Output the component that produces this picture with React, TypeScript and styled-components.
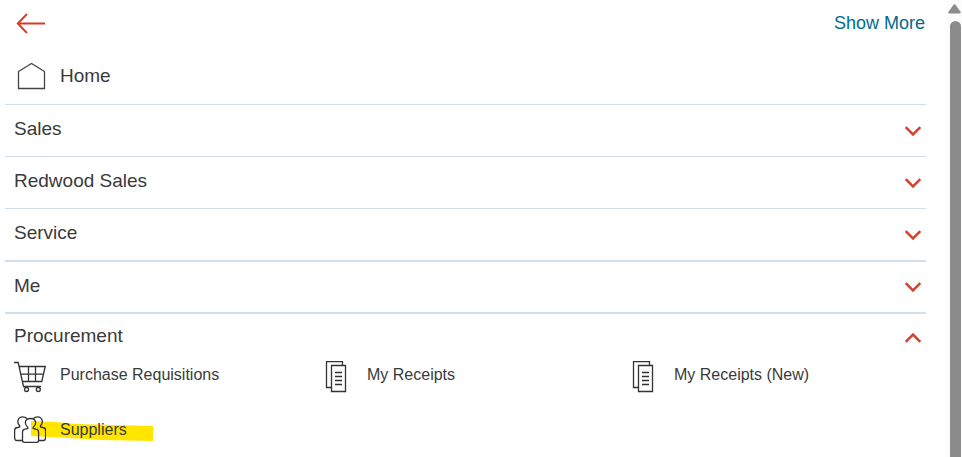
import React, { useState } from "react";
import styled, { createGlobalStyle } from "styled-components";

const GlobalStyle = createGlobalStyle`
  * { box-sizing: border-box; }
  body {
    margin: 0;
    overflow: hidden;
    background: #fff;
    color: #3a3a3a;
    font-family: "Liberation Sans", Arial, sans-serif;
  }
`;

const Page = styled.div`
  display: flex;
  height: 100vh;
`;

const Panel = styled.main`
  flex: 1;
  min-width: 0;
  padding: 0 20px 0 5px;
  overflow: hidden;
`;

const TopBar = styled.header`
  display: flex;
  align-items: center;
  justify-content: space-between;
  height: 46px;
  padding: 0 1px 0 11px;
`;

const BackButton = styled.button`
  display: flex;
  padding: 0;
  border: 0;
  background: none;
  color: #d63b25;
  cursor: pointer;
`;

const ShowMore = styled.a`
  color: #006b8f;
  font-size: 18px;
  line-height: 22px;
  text-decoration: none;
`;

const HomeLink = styled.a`
  display: flex;
  align-items: center;
  height: 59px;
  padding: 2px 0 0 12px;
  gap: 14px;
  border-bottom: 1px solid #d3dfe8;
  color: inherit;
  font-size: 19px;
  line-height: 22px;
  text-decoration: none;
`;

const Section = styled.section<{ $rule: number }>`
  border-bottom: ${(p) => p.$rule}px solid #d3dfe8;
`;

const SectionButton = styled.button<{ $height: number }>`
  display: flex;
  align-items: center;
  justify-content: space-between;
  width: 100%;
  height: ${(p) => p.$height}px;
  padding: 0 4px 0 9px;
  border: 0;
  background: none;
  color: inherit;
  font: inherit;
  font-size: 19px;
  line-height: 22px;
  text-align: left;
  cursor: pointer;
`;

const SectionLabel = styled.span`
  padding-bottom: 3px;
`;

const ItemGrid = styled.nav`
  display: grid;
  grid-template-columns: repeat(3, 1fr);
  row-gap: 23px;
`;

const Item = styled.a`
  position: relative;
  display: flex;
  align-items: center;
  gap: 14px;
  height: 32px;
  padding-left: 9px;
  color: inherit;
  font-size: 16px;
  line-height: 20px;
  text-decoration: none;
`;

const ItemLabel = styled.span`
  position: relative;
  padding-bottom: 4px;
  white-space: nowrap;
`;

const Icon = styled.svg`
  position: relative;
  flex: none;
  fill: none;
  stroke: #333;
  stroke-width: 1.3;
`;

const Marker = styled.svg`
  position: absolute;
  left: 26px;
  top: 5px;
  fill: #ffe500;
`;

const ScrollTrack = styled.div`
  display: flex;
  flex-direction: column;
  align-items: flex-end;
  width: 16px;
  padding: 4px 1px 0 0;
  gap: 7px;
  background: #fcfcfc;
`;

const ScrollThumb = styled.div`
  flex: 1;
  width: 11px;
  border-radius: 6px 6px 0 0;
  background: #8b8b8b;
`;

function Chevron({ open }: { open: boolean }) {
  return (
    <svg width="18" height="12" viewBox="0 0 18 12" fill="none" stroke="#d04532" strokeWidth="2.5" aria-hidden="true">
      <path d={open ? "M1.7 9.8 9 2.5l7.3 7.3" : "M1.7 2.2 9 9.5l7.3-7.3"} />
    </svg>
  );
}

function CartIcon() {
  return (
    <Icon width="32" height="32" viewBox="0 0 32 32" aria-hidden="true">
      <path d="M0 1.5h4.2L9.5 25.5h17.5" />
      <path d="M5.2 5.5h26l-3.4 15H8.4M6.8 13.2h22.6M14.5 5.5v15M21.5 5.5v15" />
      <circle cx="12.5" cy="28.5" r="2" />
      <circle cx="24.3" cy="28.5" r="2" />
    </Icon>
  );
}

function ReceiptIcon() {
  return (
    <Icon width="32" height="32" viewBox="0 0 32 32" aria-hidden="true">
      <path d="M10.5 26.5h-5v-26h16v4" />
      <path d="M10.5 4.5h14v26h-14z" />
      <path d="M14 11.5h7M14 15.5h7M14 19.5h7M14 23.5h7" />
    </Icon>
  );
}

function PeopleIcon() {
  return (
    <Icon width="32" height="32" viewBox="0 0 32 32" aria-hidden="true">
      <path d="M8 24.5H2.5Q.6 24.5.6 21v-6.500q0-2.800 2.700-3l2.400-.5V9.800Q3.500 7.500 3.900 4.800 4.800.8 8.700.8q2.500 0 4.300 1.700" />
      <path d="M24.8 24.500h5q1.800 0 1.800-3.500v-6.500q0-2.800-2.700-3l-2.400-.5V9.800q2.200-2.300 1.800-5Q27.400.8 23.500.8q-2.500 0-4.300 1.700" />
      <path d="M8.500 16q0-2.600 2.700-2.900l2.600-.6V11.200q-2.600-2-2.500-4.900.6-3.800 5.200-3.800t5.200 3.800q.1 2.900-2.500 4.900v1.300l2.600.6q2.800.3 2.800 2.900v8q0 2.300-1.800 2.300H10.300q-1.800 0-1.800-2.300z" />
    </Icon>
  );
}

const sections = [
  { name: "Sales", rule: 1, height: 51 },
  { name: "Redwood Sales", rule: 1, height: 51 },
  { name: "Service", rule: 2, height: 51 },
  { name: "Me", rule: 2, height: 50 },
];

const items = [
  { name: "Purchase Requisitions", icon: CartIcon },
  { name: "My Receipts", icon: ReceiptIcon },
  { name: "My Receipts (New)", icon: ReceiptIcon },
  { name: "Suppliers", icon: PeopleIcon, marked: true },
];

export default function App() {
  const [open, setOpen] = useState(true);
  return (
    <Page>
      <GlobalStyle />
      <Panel>
        <TopBar>
          <BackButton aria-label="Back">
            <svg width="30" height="22" viewBox="0 0 30 22" fill="none" stroke="currentColor" strokeWidth="1.9" aria-hidden="true">
              <path d="M29 11.5H2M11 2 1.8 11.5 11 21" />
            </svg>
          </BackButton>
          <ShowMore href="#more">Show More</ShowMore>
        </TopBar>
        <HomeLink href="#home">
          <svg width="29" height="28" viewBox="0 0 29 28" fill="none" stroke="#444" strokeWidth="1.3" aria-hidden="true">
            <path d="M1.5 9.5 14.5 1.5l13 8v17h-26z" />
          </svg>
          <span>Home</span>
        </HomeLink>
        {sections.map((s) => (
          <Section key={s.name} $rule={s.rule}>
            <SectionButton $height={s.height} aria-expanded={false}>
              <SectionLabel>{s.name}</SectionLabel>
              <Chevron open={false} />
            </SectionButton>
          </Section>
        ))}
        <Section $rule={0}>
          <SectionButton $height={47} aria-expanded={open} onClick={() => setOpen(!open)}>
            <SectionLabel>Procurement</SectionLabel>
            <Chevron open={open} />
          </SectionButton>
          {open && (
            <ItemGrid aria-label="Procurement">
              {items.map(({ name, icon: ItemIcon, marked }) => (
                <Item key={name} href="#item">
                  {marked && (
                    <Marker width="123" height="21" viewBox="0 0 123 21" aria-hidden="true">
                      <path d="M0 0 24 1 46 3 122 5V20L70 19 38 17 0 15z" />
                    </Marker>
                  )}
                  <ItemIcon />
                  <ItemLabel>{name}</ItemLabel>
                </Item>
              ))}
            </ItemGrid>
          )}
        </Section>
      </Panel>
      <ScrollTrack aria-hidden="true">
        <svg width="13" height="10" viewBox="0 0 13 10" fill="#8b8b8b">
          <path d="M5.5.8q1-1 2 0l5 7q.8 1.7-1 1.7h-10q-1.800 0-1-1.700z" />
        </svg>
        <ScrollThumb />
      </ScrollTrack>
    </Page>
  );
}
